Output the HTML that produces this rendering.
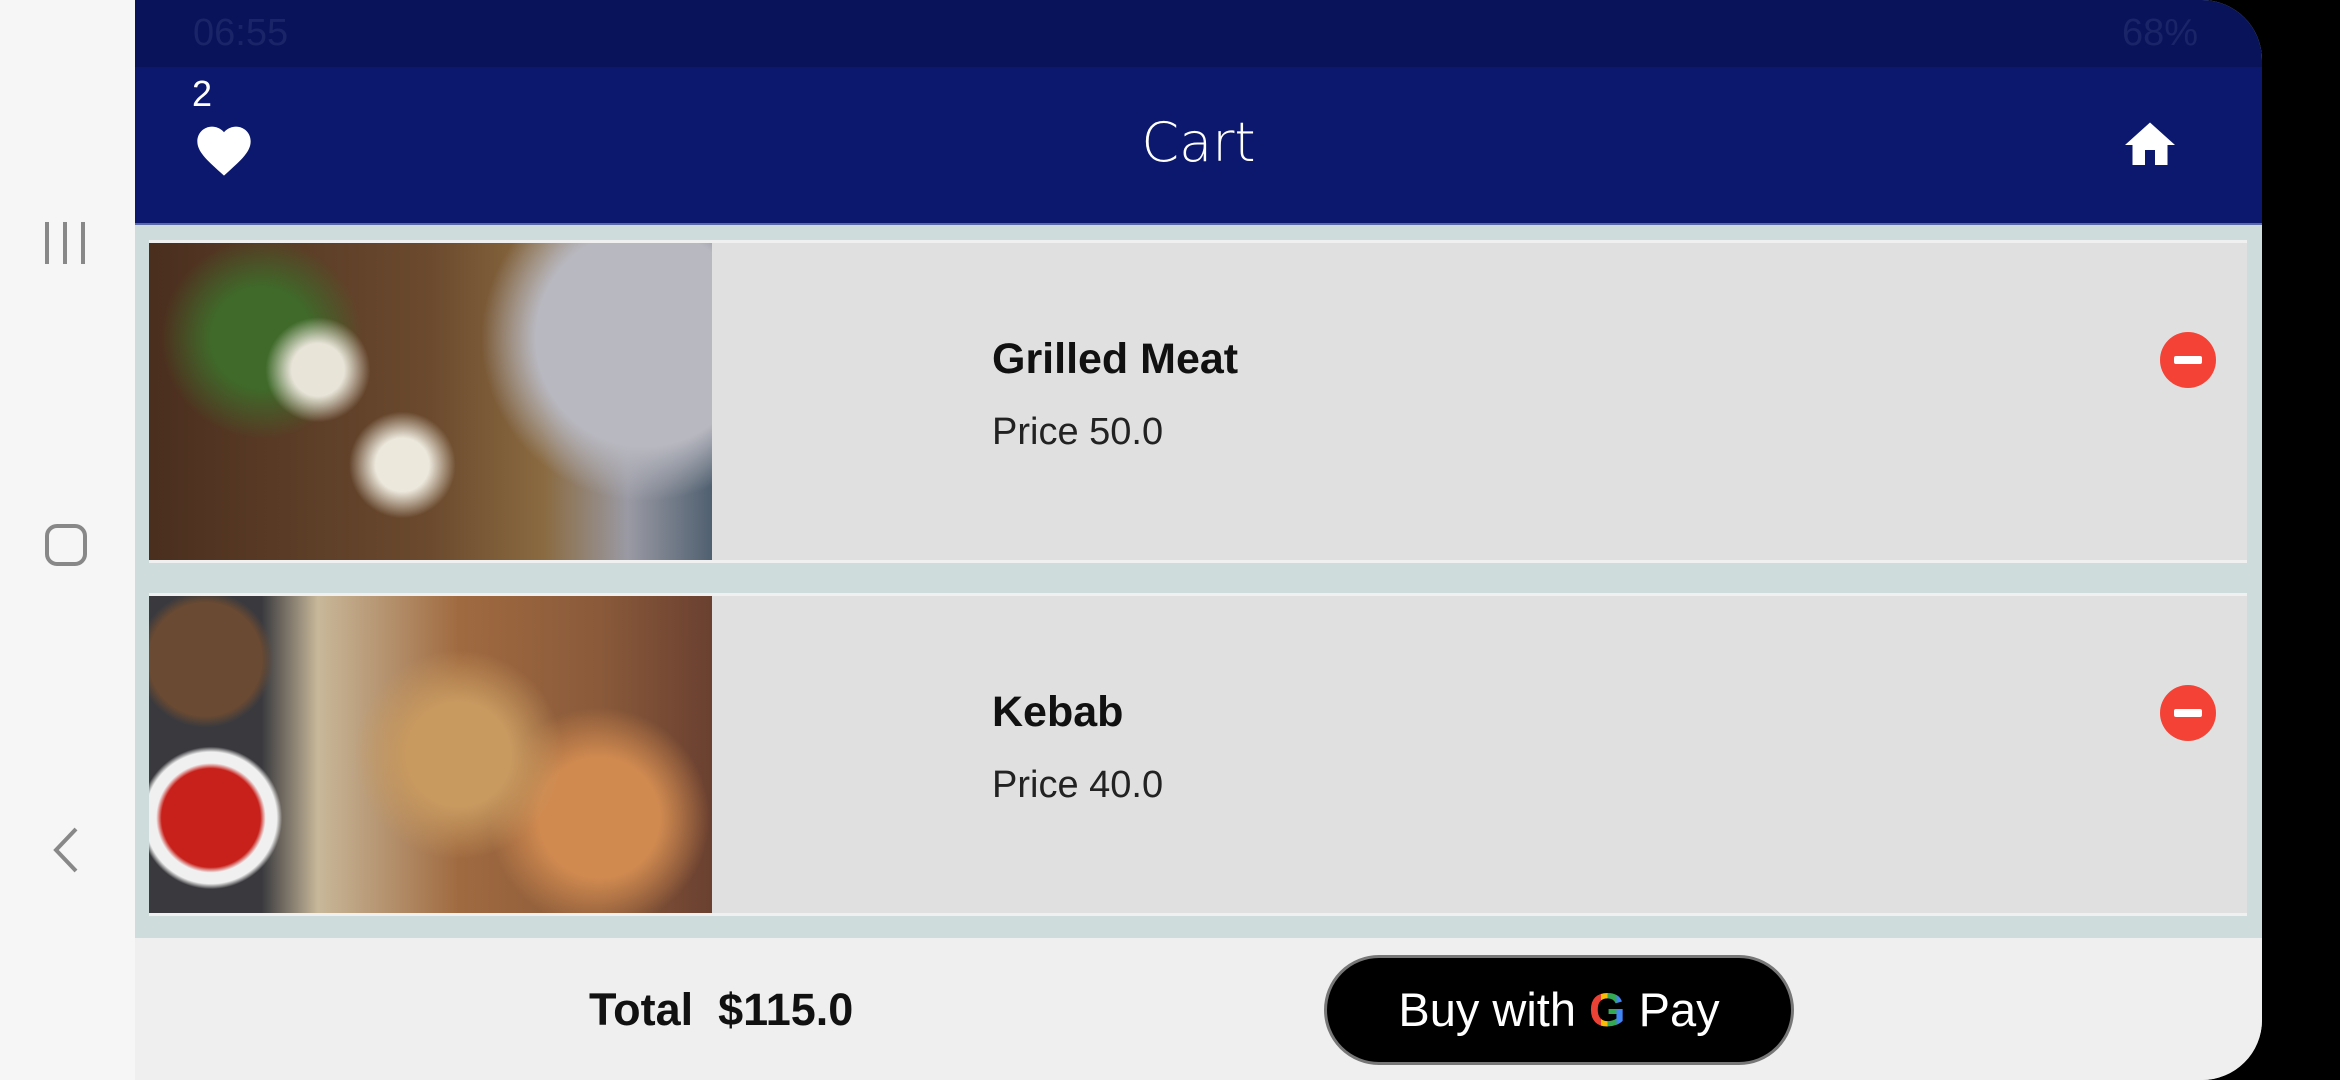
<!DOCTYPE html>
<html><head><style>
*{margin:0;padding:0;box-sizing:border-box}
body{width:2340px;height:1080px;background:#000;position:relative;overflow:hidden;font-family:"Liberation Sans",Roboto,sans-serif}
#nav{position:absolute;left:0;top:0;width:135px;height:1080px;background:#f6f6f6}
#app{position:absolute;left:135px;top:0;width:2127px;height:1080px;background:#cfdcdc;border-radius:0 60px 60px 0;overflow:hidden}
#status{position:absolute;left:0;top:0;width:100%;height:67px;background:#08135a}
#bar{position:absolute;left:0;top:67px;width:100%;height:158px;background:#0b186e;border-bottom:2px solid #5a6aa8}
.card{position:absolute;left:14px;width:2098px;height:323px;background:#e0e0e0;border-top:3px solid #f0f0f0;border-bottom:3px solid #f0f0f0}
.img{position:absolute;left:0;top:0;width:563px;height:100%}
.t{position:absolute;left:843px;font-weight:bold;font-size:43px;color:#111}
.p{position:absolute;left:843px;font-size:38px;color:#222}
.m{position:absolute;left:2011px;width:56px;height:56px;border-radius:50%;background:#f44336}
.m:after{content:"";position:absolute;left:14px;top:24px;width:28px;height:8px;background:#fff;border-radius:2px}
#bottom{position:absolute;left:0;top:938px;width:100%;height:142px;background:#efefef}
</style></head><body>
<div id="nav">
 <div style="position:absolute;left:45px;top:222px;width:4px;height:42px;background:#888"></div>
 <div style="position:absolute;left:63px;top:222px;width:4px;height:42px;background:#888"></div>
 <div style="position:absolute;left:81px;top:222px;width:4px;height:42px;background:#888"></div>
 <div style="position:absolute;left:45px;top:524px;width:42px;height:42px;border:4px solid #888;border-radius:12px"></div>
 <svg style="position:absolute;left:50px;top:825px" width="30" height="50"><path d="M26 4 L6 25 L26 46" stroke="#888" stroke-width="4" fill="none"/></svg>
</div>
<div id="app">
 <div id="status"><span style="position:absolute;left:58px;top:12px;font-size:38px;color:#1a2568">06:55</span><span style="position:absolute;right:64px;top:12px;font-size:38px;color:#1a2568">68%</span></div>
 <div id="bar">
  <div style="position:absolute;left:57px;top:6px;color:#fff;font-size:36px">2</div>
  <svg style="position:absolute;left:57px;top:51px" width="64" height="60" viewBox="0 0 24 22"><path d="M12 21.35l-1.45-1.32C5.4 15.36 2 12.28 2 8.5 2 5.42 4.42 3 7.5 3c1.74 0 3.41.81 4.5 2.09C13.09 3.81 14.76 3 16.5 3 19.58 3 22 5.42 22 8.5c0 3.78-3.4 6.86-8.55 11.54L12 21.35z" fill="#fff"/></svg>
  <div style="position:absolute;left:0;width:100%;top:44px;text-align:center;color:#fff;font-size:54px;font-family:'DejaVu Sans',sans-serif;font-weight:300">Cart</div>
  <svg style="position:absolute;left:1985px;top:48px" width="60" height="60" viewBox="0 0 24 24"><path d="M10 20v-6h4v6h5v-8h3L12 3 2 12h3v8z" fill="#fff"/></svg>
 </div>
 <div class="card" style="top:240px">
  <div class="img" style="background:radial-gradient(circle at 30% 40%,#e8e4d8 0 6%,transparent 12%),radial-gradient(circle at 20% 30%,#3f6a2a 0 10%,transparent 20%),radial-gradient(circle at 45% 70%,#ece8dc 0 7%,transparent 14%),radial-gradient(circle at 88% 30%,#b8b8c0 0 20%,transparent 30%),linear-gradient(90deg,#4a2e1e,#6b4a2e 50%,#8a6a40 70%,#9a9aa4 85%,#506070)"></div>
  <div class="t" style="top:92px">Grilled Meat</div>
  <div class="p" style="top:168px">Price 50.0</div>
  <div class="m" style="top:89px"></div>
 </div>
 <div class="card" style="top:593px">
  <div class="img" style="background:radial-gradient(circle at 11% 70%,#c8201a 0 9%,#f0f0f0 10% 12%,transparent 13%),radial-gradient(circle at 10% 20%,#6a4a32 0 10%,transparent 12%),radial-gradient(circle at 55% 50%,#c89a60 0 15%,transparent 30%),radial-gradient(circle at 80% 70%,#d08a50 0 12%,transparent 22%),linear-gradient(90deg,#3a3a3e 0 20%,#c8b89a 30%,#a06a40 55%,#8a5a3a 80%,#6a4030)"></div>
  <div class="t" style="top:92px">Kebab</div>
  <div class="p" style="top:168px">Price 40.0</div>
  <div class="m" style="top:89px"></div>
 </div>
 <div id="bottom">
  <div style="position:absolute;left:454px;top:46px;font-weight:bold;font-size:45px;color:#111">Total&nbsp; $115.0</div>
  <div style="position:absolute;left:1189px;top:17px;width:470px;height:110px;background:#000;border:3px solid #777;border-radius:55px;color:#fff;font-size:47px;text-align:center;line-height:104px">Buy with <span style="font-weight:bold;background:linear-gradient(90deg,#ea4335 0 33%,#fbbc05 33% 50%,#34a853 50% 75%,#4285f4 75%);-webkit-background-clip:text;color:transparent">G</span> Pay</div>
 </div>
</div>
</body></html>
